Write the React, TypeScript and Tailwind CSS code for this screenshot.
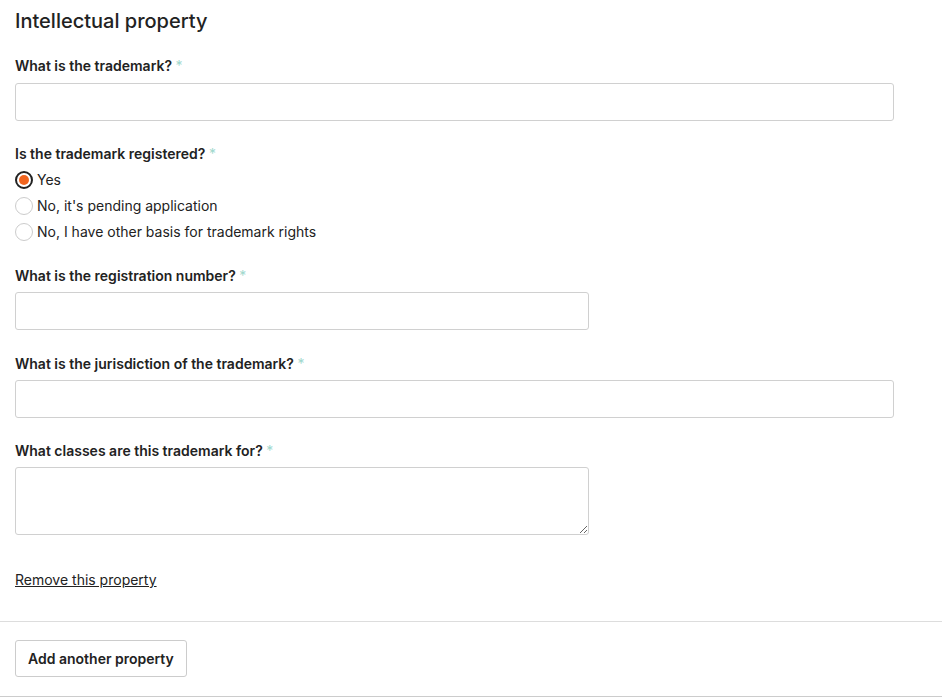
import { useState } from "react";

const font = { fontFamily: "Inter, 'Noto Sans', sans-serif" };

function Label({ text, gap = "mb-[6px]" }: { text: string; gap?: string }) {
  return (
    <label className={`block text-[14px] leading-[20px] font-semibold text-[#222] ${gap}`}>
      {text} <span className="text-[#9fd8cd] font-normal">*</span>
    </label>
  );
}

function Radio({
  label,
  checked,
  onClick,
}: {
  label: string;
  checked: boolean;
  onClick: () => void;
}) {
  return (
    <button
      type="button"
      onClick={onClick}
      className="flex items-center h-[26px] text-[14px] leading-[20px] text-[#222] text-left"
    >
      <span
        className={
          checked
            ? "w-[18px] h-[18px] rounded-full border-2 border-[#222] flex items-center justify-center mr-[4px]"
            : "w-[18px] h-[18px] rounded-full border border-[#ccc] mr-[4px]"
        }
      >
        {checked && <span className="w-[10px] h-[10px] rounded-full bg-[#f1641e]" />}
      </span>
      {label}
    </button>
  );
}

export default function App() {
  const [registered, setRegistered] = useState("yes");

  return (
    <div className="bg-white w-[942px] h-[697px] overflow-hidden" style={font}>
      <div className="px-[15px] pt-[8px]">
        <h1 className="text-[20px] leading-[26px] font-medium text-[#222] mb-[22px]">
          Intellectual property
        </h1>

        <div className="mb-[23px]">
          <Label text="What is the trademark?" gap="mb-[7px]" />
          <input className="block w-[879px] h-[38px] border border-[#d0d0d0] rounded-[3px] px-3 outline-none" />
        </div>

        <div className="mb-[21px]">
          <Label text="Is the trademark registered?" gap="mb-[3px]" />
          <div className="flex flex-col">
            <Radio label="Yes" checked={registered === "yes"} onClick={() => setRegistered("yes")} />
            <Radio
              label="No, it's pending application"
              checked={registered === "pending"}
              onClick={() => setRegistered("pending")}
            />
            <Radio
              label="No, I have other basis for trademark rights"
              checked={registered === "other"}
              onClick={() => setRegistered("other")}
            />
          </div>
        </div>

        <div className="mb-[24px]">
          <Label text="What is the registration number?" />
          <input className="block w-[574px] h-[38px] border border-[#d0d0d0] rounded-[3px] px-3 outline-none" />
        </div>

        <div className="mb-[23px]">
          <Label text="What is the jurisdiction of the trademark?" />
          <input className="block w-[879px] h-[38px] border border-[#d0d0d0] rounded-[3px] px-3 outline-none" />
        </div>

        <div className="mb-[35px]">
          <Label text="What classes are this trademark for?" />
          <textarea className="block w-[574px] h-[68px] border border-[#d0d0d0] rounded-[3px] px-3 py-2 outline-none" />
        </div>

        <a href="#" className="block text-[14px] leading-[20px] text-[#222] underline mb-[31px] w-fit">
          Remove this property
        </a>
      </div>

      <div className="border-t border-[#ddd] pt-[18px] pb-[19px] px-[15px]">
        <button
          type="button"
          className="h-[37px] px-[12px] border border-[#ccc] rounded-[3px] text-[14px] font-semibold text-[#222] bg-white"
        >
          Add another property
        </button>
      </div>
      <div className="border-t border-[#ccc]" />
    </div>
  );
}
